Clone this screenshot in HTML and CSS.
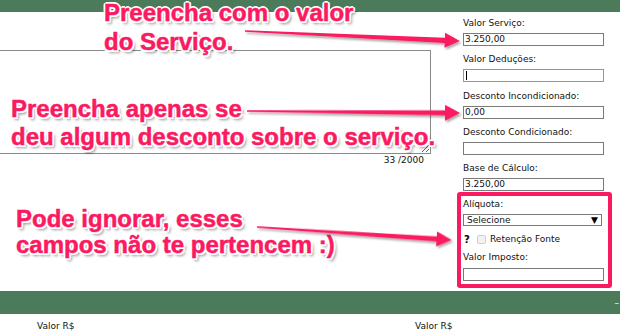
FILE: index.html
```html
<!DOCTYPE html>
<html lang="pt-BR">
<head>
<meta charset="utf-8">
<title>Valores</title>
<link rel="stylesheet" href="styles.css">
</head>
<body>
<div class="page">
  <div class="topbar"></div>
  <div class="main">
    <div class="left">
      <div class="ta-wrap"><textarea class="obs"></textarea></div>
      <div class="counter">33 /2000</div>
    </div>
    <div class="right">
      <div class="field">
        <div class="lbl">Valor Serviço:</div>
        <div class="inp">3.250,00</div>
      </div>
      <div class="field">
        <div class="lbl">Valor Deduções:</div>
        <div class="inp focus"><span class="caret"></span></div>
      </div>
      <div class="field">
        <div class="lbl">Desconto Incondicionado:</div>
        <div class="inp">0,00</div>
      </div>
      <div class="field">
        <div class="lbl">Desconto Condicionado:</div>
        <div class="inp"></div>
      </div>
      <div class="field">
        <div class="lbl">Base de Cálculo:</div>
        <div class="inp">3.250,00</div>
      </div>
      <div class="highlight">
        <div class="lbl">Alíquota:</div>
        <div class="sel"><span>Selecione</span><span class="tri">▼</span></div>
        <div class="check-row">
          <span class="q">?</span>
          <span class="cb"></span>
          <span class="cb-lbl">Retenção Fonte</span>
        </div>
        <div class="lbl lbl-imp">Valor Imposto:</div>
        <div class="inp inp-imp"></div>
      </div>
    </div>
  </div>
  <div class="bar"><span class="collapse">–</span></div>
  <div class="totals"><span>Valor R$</span><span>Valor R$</span></div>

  <div class="note note1">Preencha com o valor<br>do Serviço.</div>
  <div class="note note2">Preencha apenas se<br>deu algum desconto sobre o serviço.</div>
  <div class="note note3">Pode ignorar, esses<br>campos não te pertencem :)</div>

  <svg class="arrows" width="620" height="331" viewBox="0 0 620 331">
    <defs>
      <filter id="sh" x="-10%" y="-50%" width="120%" height="200%">
        <feDropShadow dx="1.5" dy="2" stdDeviation="1.2" flood-color="#000" flood-opacity="0.35"/>
      </filter>
    </defs>
    <g fill="#fb1a61" filter="url(#sh)">
      <g transform="translate(245,31) rotate(2.66)">
        <polygon points="0,-0.8 200,-2.6 200,-7.5 215,0 200,7.5 200,2.6 0,0.8"/>
      </g>
      <g transform="translate(247,111) rotate(0.54)">
        <polygon points="0,-0.8 198,-2.6 198,-8 213,0 198,8 198,2.6 0,0.8"/>
      </g>
      <g transform="translate(257,227) rotate(3.81)">
        <polygon points="0,-0.8 180,-2.6 180,-7.5 195,0 180,7.5 180,2.6 0,0.8"/>
      </g>
    </g>
  </svg>
</div>
</body>
</html>
```
FILE: styles.css
```css
* { box-sizing: border-box; }
html, body { margin: 0; padding: 0; background: #fff; }
body {
  width: 620px;
  height: 331px;
  overflow: hidden;
  font-family: "DejaVu Sans", Verdana, sans-serif;
  font-size: 9px;
  color: #111;
}
.page { position: relative; width: 620px; height: 331px; overflow: hidden; }

.topbar { height: 12px; background: #4b7b5b; }

.main { display: flex; height: 279px; }
.left { flex: 0 0 457px; }
.ta-wrap { width: 431px; margin-top: 38px; }
.obs {
  display: block;
  width: 431px;
  height: 104px;
  margin: 0;
  border: 1px solid #8a8a8a;
  border-left: none;
  background: #fff;
  resize: both;
}
.counter {
  width: 431px;
  padding-right: 7px;
  text-align: right;
  line-height: 10px;
  margin-top: 1px;
  color: #111;
}

.right { flex: 0 0 155px; display: flex; flex-direction: column; padding-top: 4px; }
.field { padding-left: 6px; }
.field + .field { margin-top: 6.25px; }
.lbl { line-height: 14px; height: 14px; white-space: nowrap; color: #111; }
.inp {
  width: 141px;
  height: 13px;
  margin-top: 3px;
  border: 1px solid #7a7a7a;
  background: #fff;
  padding: 0 1px;
  line-height: 11px;
  position: relative;
}
.inp.focus { border-color: #6b9fdc; }
.caret { display: block; width: 1px; height: 9px; margin: 1px 0 0 1px; background: #000; }

.highlight {
  margin-top: 1px;
  width: 155px;
  border: 4px solid #fb1a61;
  border-radius: 3px;
  padding: 1px 4px 3px 2px;
}
.sel {
  display: flex;
  justify-content: space-between;
  align-items: center;
  width: 139px;
  height: 12px;
  margin-top: 3px;
  border: 1px solid #7a7a7a;
  padding: 0 3px 0 3px;
  line-height: 10px;
}
.tri { font-size: 9px; color: #000; }
.check-row { display: flex; align-items: center; height: 16px; margin-top: 5px; }
.q { font-weight: bold; font-size: 10px; width: 14px; padding-left: 1px; color: #000; }
.cb {
  width: 9px;
  height: 9px;
  border: 1px solid #cfcfcf;
  border-radius: 2px;
  background: #f2f2f2;
  margin-right: 4px;
}
.cb-lbl { color: #111; }
.lbl-imp { margin-top: 3px; }
.inp-imp { margin-top: 4px; }

.bar {
  height: 23px;
  background: #4b7b5b;
  display: flex;
  justify-content: flex-end;
  align-items: center;
  padding-right: 1px;
}
.collapse { color: #fff; font-size: 9px; line-height: 10px; }

.totals {
  display: grid;
  grid-template-columns: 378px 1fr;
  padding: 5px 0 0 37px;
  line-height: 14px;
  color: #111;
}

.note {
  position: absolute;
  font-family: "Liberation Sans", Arial, sans-serif;
  font-weight: bold;
  font-size: 24px;
  color: #fb1a61;
  -webkit-text-stroke: 0.5px #fb1a61;
  white-space: nowrap;
  text-shadow:
    -1.5px -1.5px 0 #fff, 1.5px -1.5px 0 #fff, -1.5px 1.5px 0 #fff, 1.5px 1.5px 0 #fff,
    0 -2px 0 #fff, 0 2px 0 #fff, -2px 0 0 #fff, 2px 0 0 #fff,
    2.5px 3px 3px rgba(0,0,0,0.45);
}
.note1 { left: 104px; top: -2px; line-height: 29px; }
.note2 { left: 11px; top: 95px; line-height: 28px; }
.note3 { left: 16px; top: 206px; line-height: 26px; }

.arrows { position: absolute; left: 0; top: 0; pointer-events: none; }
```
